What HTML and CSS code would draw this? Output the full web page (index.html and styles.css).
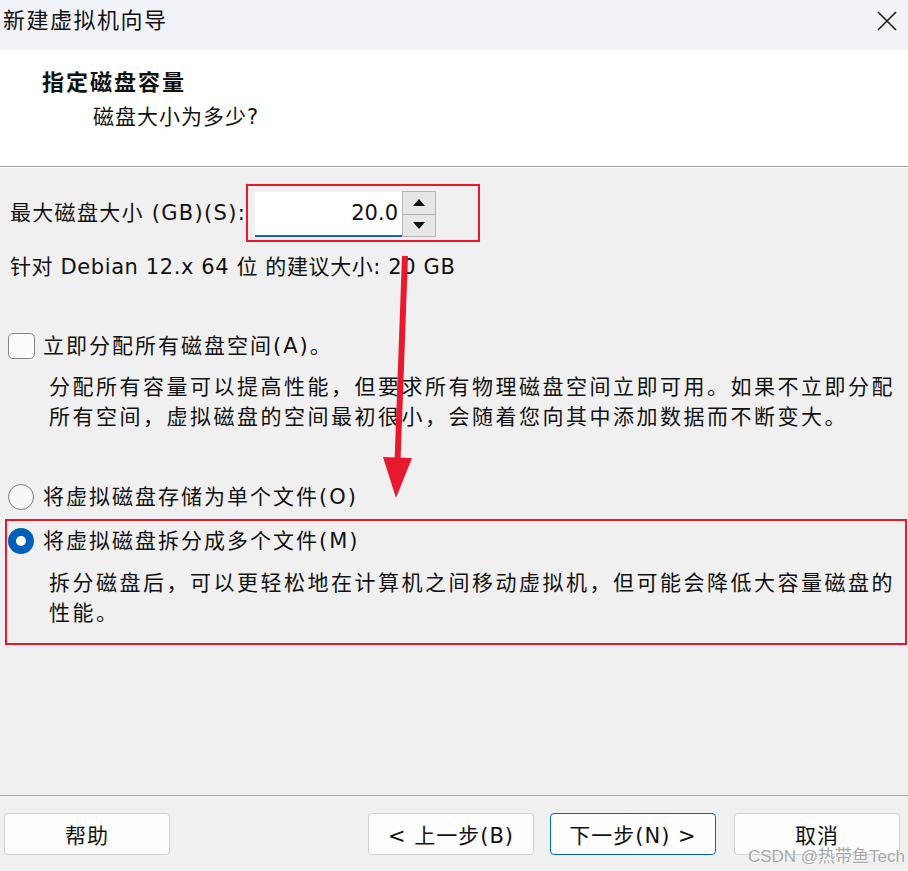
FILE: index.html
```html
<!DOCTYPE html>
<html lang="zh-CN">
<head>
<meta charset="utf-8">
<title>新建虚拟机向导</title>
<link rel="stylesheet" href="styles.css">
</head>
<body>
<div class="titlebar">
  <span class="title">新建虚拟机向导</span>
  <svg class="close" width="20" height="20" viewBox="0 0 20 20"><path d="M1 1 L19 19 M19 1 L1 19" stroke="#1a1a1a" stroke-width="1.6" fill="none"/></svg>
</div>
<div class="header">
  <div class="h1">指定磁盘容量</div>
  <div class="h2">磁盘大小为多少?</div>
</div>
<div class="content">
  <div class="size-row">
    <span class="size-label">最大磁盘大小 (GB)(S):</span>
    <div class="size-box hl">
      <div class="num">20.0</div>
      <div class="spin">
        <div class="spin-btn"><svg width="12" height="7" viewBox="0 0 12 7"><polygon points="6,0 12,7 0,7" fill="#111"/></svg></div>
        <div class="spin-btn"><svg width="12" height="7" viewBox="0 0 12 7"><polygon points="0,0 12,0 6,7" fill="#111"/></svg></div>
      </div>
    </div>
  </div>
  <div class="recommend">针对 Debian 12.x 64 位 的建议大小: 20 GB</div>
  <div class="opt-row check-row">
    <span class="checkbox"></span>
    <span class="opt-label">立即分配所有磁盘空间(A)。</span>
  </div>
  <p class="desc">分配所有容量可以提高性能，但要求所有物理磁盘空间立即可用。如果不立即分配<br>所有空间，虚拟磁盘的空间最初很小，会随着您向其中添加数据而不断变大。</p>
  <div class="opt-row radio-row1">
    <span class="radio"></span>
    <span class="opt-label">将虚拟磁盘存储为单个文件(O)</span>
  </div>
  <div class="split-box hl">
    <div class="opt-row radio-row2">
      <span class="radio checked"></span>
      <span class="opt-label">将虚拟磁盘拆分成多个文件(M)</span>
    </div>
    <p class="desc desc2">拆分磁盘后，可以更轻松地在计算机之间移动虚拟机，但可能会降低大容量磁盘的<br>性能。</p>
  </div>
</div>
<div class="footer">
  <div class="btn">帮助</div>
  <div class="spacer"></div>
  <div class="btn">&lt; 上一步(B)</div>
  <div class="btn primary">下一步(N) &gt;</div>
  <div class="btn cancel">取消</div>
</div>
<svg class="arrow" width="908" height="871" viewBox="0 0 908 871">
  <line x1="405" y1="256" x2="397.5" y2="462" stroke="#e8192c" stroke-width="6"/>
  <polygon points="383,457 412,458 396,498" fill="#e8192c"/>
</svg>
<div class="watermark">CSDN @热带鱼Tech</div>
</body>
</html>
```
FILE: styles.css
```css
* { box-sizing: border-box; margin: 0; padding: 0; }
html, body { width: 908px; height: 871px; overflow: hidden; }
body {
  background: #f0f0f0;
  font-family: "DejaVu Sans", "Noto Sans CJK SC", sans-serif;
  color: #111;
  position: relative;
}
.titlebar {
  height: 50px;
  background: #f1f3f9;
  display: flex;
  align-items: center;
  justify-content: space-between;
  padding: 0 11px 8px 3px;
}
.title { font-size: 22px; letter-spacing: 1.5px; line-height: 30px; }
.close { display: block; }
.header {
  height: 117px;
  background: #fff;
  border-bottom: 1px solid #a0a0a0;
  padding-top: 15px;
}
.h1 {
  font-family: "Noto Sans CJK SC", sans-serif;
  font-size: 22px; font-weight: 700; line-height: 30px;
  margin-left: 42px; letter-spacing: 2px;
}
.h2 {
  font-size: 21px; line-height: 30px; margin-top: 7px;
  margin-left: 93px; letter-spacing: 1px;
}
.content {
  height: 628px;
  border-top: 1px solid #fff;
  padding-top: 16px;
}
.hl { border: 2px solid #e8192c; }
.size-row { display: flex; align-items: center; margin-left: 10px; }
.size-label { font-size: 21px; letter-spacing: 1.3px; width: 236px; line-height: 30px; white-space: nowrap; }
.size-box {
  width: 234px; height: 58px;
  padding: 5px 0 0 7px;
  display: flex; align-items: flex-start;
}
.num {
  width: 147px; height: 45px; margin-top: 1px;
  background: #fff;
  border-bottom: 2px solid #1464c8;
  text-align: right;
  font-size: 21px; line-height: 43px;
  padding-right: 4px;
}
.spin { width: 34px; height: 46px; display: flex; flex-direction: column; }
.spin-btn {
  flex: 1;
  border: 1px solid #b4b4b4;
  background: #e6e6e6;
  display: flex; align-items: center; justify-content: center;
}
.spin-btn + .spin-btn { border-top: none; }
.recommend {
  margin: 10px 0 0 10px;
  font-size: 21px; line-height: 30px; letter-spacing: 0.6px;
}
.opt-row { display: flex; align-items: center; height: 30px; }
.opt-label { font-size: 21px; letter-spacing: 2px; line-height: 30px; }
.check-row { margin: 49px 0 0 8px; }
.checkbox {
  width: 27px; height: 26px;
  border: 1.5px solid #858585; border-radius: 5px;
  background: #fbfbfb; margin-right: 8px;
}
.desc {
  margin: 11px 0 0 49px;
  font-size: 21px; letter-spacing: 2.5px; line-height: 30px;
  white-space: nowrap;
}
.radio-row1 { margin: 50px 0 0 8px; }
.radio {
  width: 26px; height: 26px; border-radius: 50%;
  border: 1.5px solid #7a7a7a; background: #f7f7f7;
  margin-right: 9px;
}
.radio.checked { border: 8px solid #005fb8; background: #fff; }
.split-box {
  margin: 7px 0 0 5px;
  width: 902px; height: 126px;
  padding-top: 5px;
}
.radio-row2 { margin-left: 1px; }
.desc2 { margin: 12px 0 0 42px; }
.footer {
  border-top: 1px solid #a8a8a8;
  height: 76px;
  padding: 17px 8px 0 4px;
  display: flex; align-items: flex-start;
}
.spacer { flex: 1; }
.btn {
  width: 166px; height: 42px;
  border: 1px solid #d0d0d0; border-radius: 4px;
  background: #fdfdfd;
  font-size: 21px; letter-spacing: 1px;
  display: flex; align-items: center; justify-content: center;
}
.btn.primary { border: 1.5px solid #0067c0; margin-left: 16px; }
.btn.cancel { margin-left: 18px; }
.arrow { position: absolute; left: 0; top: 0; pointer-events: none; }
.watermark {
  position: absolute; right: 3px; bottom: 4px;
  font-family: "Liberation Sans", "Noto Sans CJK SC", sans-serif;
  font-size: 17px; color: #a6a6a6;
  text-shadow: 0 0 2px #fff, 0 0 1px #fff;
}
```
